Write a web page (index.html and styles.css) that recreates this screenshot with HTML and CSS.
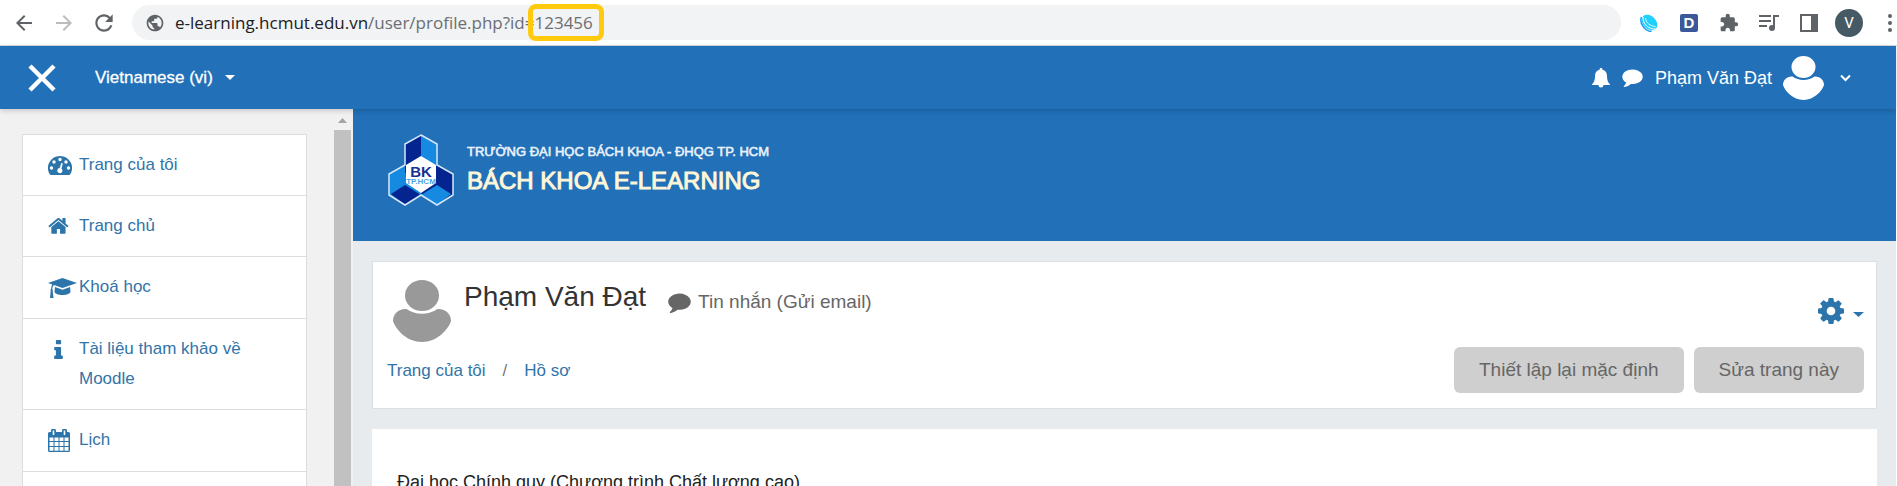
FILE: index.html
```html
<!DOCTYPE html>
<html lang="vi">
<head>
<meta charset="utf-8">
<title>Phạm Văn Đạt: Hồ sơ</title>
<link rel="stylesheet" href="styles.css">
</head>
<body>
<svg class="sprite" aria-hidden="true">
  <symbol id="comment" viewBox="0 128 1792 1664"><path d="M1792 896q0 174-120 321.500t-326 233-450 85.500q-70 0-145-8-198 175-460 242-49 14-114 22-17 2-30.500-9t-17.500-29v-1q-3-4-.5-12t2-10 4.500-9.500l6-9 7-8.500 8-9q7-8 31-34.500t34.500-38 31-39.500 32.500-51 27-59 26-76q-157-89-247.500-220t-90.500-281q0-130 71-248.500t191-204.500 286-136.500 348-50.500q244 0 450 85.500t326 233 120 321.500z"/></symbol>
  <symbol id="person" viewBox="0 0 58 62"><ellipse cx="29" cy="15.500" rx="17" ry="15.500"/><path d="M13.500 29C5.500 28.500 0 34 0 41c3 9 14 21 29 21s26-12 29-21c0-7-5.500-12.500-13.500-12C36 35.300 22 35.300 13.500 29z"/></symbol>
</svg>

<div class="browser">
  <button class="tool" aria-label="Back"><svg viewBox="0 0 24 24" width="24" height="24"><path d="M20 11H7.830l5.590-5.590L12 4l-8 8 8 8 1.410-1.410L7.830 13H20v-2z"/></svg></button>
  <button class="tool tool-off" aria-label="Forward"><svg viewBox="0 0 24 24" width="24" height="24"><path d="M4 11h12.170l-5.590-5.590L12 4l8 8-8 8-1.410-1.410L16.170 13H4v-2z"/></svg></button>
  <button class="tool" aria-label="Reload"><svg viewBox="0 0 24 24" width="26" height="26"><path d="M17.650 6.350C16.200 4.900 14.210 4 12 4c-4.420 0-7.990 3.580-7.990 8s3.570 8 7.990 8c3.730 0 6.840-2.550 7.730-6h-2.080c-.82 2.330-3.040 4-5.650 4-3.310 0-6-2.690-6-6s2.690-6 6-6c1.660 0 3.140.69 4.220 1.780L13 11h7V4l-2.350 2.350z"/></svg></button>
  <div class="address">
    <svg viewBox="0 0 24 24" width="20" height="20"><path d="M12 2C6.480 2 2 6.480 2 12s4.480 10 10 10 10-4.480 10-10S17.520 2 12 2zm-1 17.930c-3.950-.49-7-3.850-7-7.930 0-.62.08-1.210.21-1.790L9 15v1c0 1.100.9 2 2 2v1.930zm6.900-2.540c-.26-.81-1-1.390-1.900-1.390h-1v-3c0-.55-.45-1-1-1H8v-2h2c.55 0 1-.45 1-1V7h2c1.100 0 2-.9 2-2v-.41c2.930 1.190 5 4.060 5 7.410 0 2.080-.8 3.970-2.100 5.390z"/></svg>
    <div class="url" role="textbox" aria-label="Address"><span class="host">e-learning.hcmut.edu.vn</span>/user/profile.php?id=<span class="marked">123456</span></div>
  </div>
  <div class="extensions">
    <button class="tool" aria-label="Planet"><svg viewBox="0 0 18 18" width="18" height="18"><ellipse cx="9.500" cy="8.500" rx="9" ry="6.500" transform="rotate(45 9.500 8.500)" fill="#1fd0fb"/><path d="M1.500 3C-1 9 5 17.500 11.500 17.500" fill="none" stroke="#1a9cf8" stroke-width="1.500"/><path d="M3 3C2.500 9.500 8 15.500 16 15" fill="none" stroke="#fff" stroke-width="1"/><path d="M5.500 4C6 9 10 12 15.500 12.500" fill="none" stroke="#e4fbff" stroke-width="1"/></svg></button>
    <button class="tool" aria-label="Dictionary"><span class="dict">D</span></button>
    <button class="tool" aria-label="Extensions"><svg viewBox="0 0 24 24" width="20" height="20"><path d="M20.500 11H19V7c0-1.100-.9-2-2-2h-4V3.500C13 2.120 11.880 1 10.500 1S8 2.120 8 3.500V5H4c-1.100 0-1.990.9-1.990 2v3.800H3.500c1.490 0 2.700 1.210 2.700 2.700s-1.210 2.700-2.700 2.700H2V20c0 1.100.9 2 2 2h3.800v-1.500c0-1.490 1.210-2.700 2.700-2.700s2.700 1.210 2.700 2.700V22H17c1.100 0 2-.9 2-2v-4h1.500c1.380 0 2.500-1.120 2.500-2.500S21.880 11 20.500 11z"/></svg></button>
    <button class="tool" aria-label="Media"><svg viewBox="0 0 20 18" width="20" height="18"><path d="M0 1h12v2H0zM0 6h12v2H0zM0 11h8v2H0zM14 1h6v2h-4v11h-2z"/><circle cx="13" cy="14" r="3"/></svg></button>
    <button class="tool" aria-label="Side panel"><svg viewBox="0 0 18 18" width="18" height="18"><path fill-rule="evenodd" d="M0 0h18v18H0zM2 2v14h9V2z"/></svg></button>
    <button class="tool" aria-label="Profile"><span class="badge">V</span></button>
    <button class="tool dots" aria-label="Menu"><svg viewBox="0 0 4 18" width="4" height="18"><circle cx="2" cy="2" r="2"/><circle cx="2" cy="9" r="2"/><circle cx="2" cy="16" r="2"/></svg></button>
  </div>
</div>

<div class="app">
  <header class="topbar">
    <button class="plain" aria-label="Close menu"><svg viewBox="0 0 28 28" width="28" height="28"><path d="M2 2l24 24M26 2L2 26" stroke="#fff" stroke-width="4.500" fill="none"/></svg></button>
    <div class="language">
      <select aria-label="Language"><option>Vietnamese (vi)</option></select>
      <svg viewBox="0 0 10 5" width="10" height="5"><path d="M0 0h10L5 5z"/></svg>
    </div>
    <div class="account">
      <button class="plain" aria-label="Notifications"><svg viewBox="0 0 18 20" width="18" height="20"><path d="M9 0c.8 0 1.400.5 1.400 1.400v.4C13.600 2.500 15 5 15 8c0 4.500 1.200 6.700 3 8.200 0 .6-.4.9-1 .9h-5.500a2.500 2.500 0 0 1-5 0H1c-.6 0-1-.3-1-.9C1.800 14.700 3 12.500 3 8c0-3 1.400-5.500 4.600-6.200v-.4C7.600.5 8.200 0 9 0z"/></svg></button>
      <button class="plain" aria-label="Messages"><svg width="21" height="19"><use href="#comment"/></svg></button>
      <button class="plain user"><span>Phạm Văn Đạt</span><svg class="face" width="41" height="44"><use href="#person"/></svg><svg viewBox="0 0 11 8" width="11" height="8"><path d="M1 1.500l4.500 4.500L10 1.500" fill="none" stroke="#fff" stroke-width="2"/></svg></button>
    </div>
  </header>

  <div class="body">
    <aside class="sidebar">
      <nav class="menu">
        <a href="#"><span class="icon"><svg viewBox="0 0 24 19" width="24" height="19"><path fill-rule="evenodd" d="M12 0a12 12 0 0 1 10.300 18.200q-.4.800-1.200.8H2.900q-.8 0-1.200-.8A12 12 0 0 1 12 0zM3.500 10.300a1.700 1.700 0 1 0 0 3.400 1.700 1.700 0 0 0 0-3.400zm2.500-6a1.700 1.700 0 1 0 0 3.400 1.700 1.700 0 0 0 0-3.400zm6-2.500a1.700 1.700 0 1 0 0 3.400 1.700 1.700 0 0 0 0-3.400zm6 2.500a1.700 1.700 0 1 0 0 3.400 1.700 1.700 0 0 0 0-3.400zm2.500 6a1.700 1.700 0 1 0 0 3.400 1.700 1.700 0 0 0 0-3.400zM13.300 7l-1.600 5a2.600 2.600 0 1 0 1.700.5l1.500-5z"/></svg></span>Trang của tôi</a>
        <a href="#"><span class="icon"><svg viewBox="50 200 1700 1400" width="21" height="18"><path d="M1472 992v480q0 26-19 45t-45 19h-384v-384H768v384H384q-26 0-45-19t-19-45V992q0-1 .5-3t.5-3l575-474 575 474q1 2 1 6zm223-69l-62 74q-8 9-21 11h-3q-13 0-21-7L896 424l-692 577q-12 8-24 7-13-2-21-11l-62-74q-8-10-7-23.500t11-21.500l719-599q32-26 76-26t76 26l244 204V288q0-14 9-23t23-9h192q14 0 23 9t9 23v408l219 182q10 8 11 21.500t-7 23.500z"/></svg></span>Trang chủ</a>
        <a href="#"><span class="icon tall"><svg viewBox="0 0 29 20" width="29" height="20"><path d="M14.500 0L29 5l-14.500 5L6 7q-1.600 1-1.700 4.200 1 .6.400 1.800L5.500 20H2l.7-7q-.7-1.200.4-1.900Q3.200 8 4.300 6.400L0 5zM7 9l7.500 2.700L22 9l.5 4.500c0 2-3.700 3.500-8 3.500s-8-1.500-8-3.500z"/></svg></span>Khoá học</a>
        <a href="#"><span class="icon info"><svg viewBox="576 128 640 1408" width="9" height="19"><path d="M1216 1344v128q0 26-19 45t-45 19H640q-26 0-45-19t-19-45v-128q0-26 19-45t45-19h64V896h-64q-26 0-45-19t-19-45V704q0-26 19-45t45-19h384q26 0 45 19t19 45v576h64q26 0 45 19t19 45zM1088 192v192q0 26-19 45t-45 19H768q-26 0-45-19t-19-45V192q0-26 19-45t45-19h256q26 0 45 19t19 45z"/></svg></span>Tài liệu tham khảo về Moodle</a>
        <a href="#"><span class="icon tall"><svg viewBox="0 0 22 23" width="22" height="23"><path fill-rule="evenodd" d="M1.500 3H3V2a2 2 0 0 1 5 0v1h6V2a2 2 0 0 1 5 0v1h1.500Q22 3 22 4.500v17q0 1.500-1.500 1.500h-19Q0 23 0 21.500v-17Q0 3 1.500 3zM4.700 1.500V6h1.600V1.500zm11 0V6h1.600V1.500zM1.500 8.500V12h4V8.500zm5 0V12h4V8.500zm5 0V12h4V8.500zm5 0V12h4V8.500zM1.500 13v4h4v-4zm5 0v4h4v-4zm5 0v4h4v-4zm5 0v4h4v-4zM1.500 18v3.700h4V18zm5 0v3.700h4V18zm5 0v3.700h4V18zm5 0v3.700h4V18z"/></svg></span>Lịch</a>
      </nav>
      <div class="scroll"><svg viewBox="0 0 9 5" width="9" height="5"><path d="M4.500 0L9 5H0z"/></svg><div class="thumb"></div></div>
    </aside>

    <main class="main">
      <div class="banner">
        <svg class="logo" viewBox="0 0 66 72" width="66" height="72">
          <path d="M33 1l16 9v29L33 31l-16 8V10z" fill="#04258f"/><path d="M33 1l16 9v29l-16-8z" fill="#158ae0"/>
          <path d="M17 31L1 40v21l16 10 16-10V50l-16-8z" fill="#158ae0"/><path d="M3 60l14-9 16 10-16 10z" fill="#04258f"/>
          <path d="M49 31l16 9v21L49 71 33 61V50z" fill="#04258f"/><path d="M33 61l16-10 14 9-14 11z" fill="#158ae0"/>
          <path d="M33 22l15 9v18l-15 10-15-10V31z" fill="#fff"/>
          <path d="M33 1l16 9v21l16 9v21L49 71 33 61 17 71 1 61V40l16-9V10z" fill="none" stroke="#d6e8f8" stroke-width="1.500"/>
          <text x="33" y="43" class="logo-bk">BK</text><text x="33" y="50" class="logo-city">TP.HCM</text>
        </svg>
        <div class="brand"><div class="school">TRƯỜNG ĐẠI HỌC BÁCH KHOA - ĐHQG TP. HCM</div><div class="site">BÁCH KHOA E-LEARNING</div></div>
      </div>

      <section class="card profile">
        <div class="row">
          <svg class="portrait" width="58" height="62"><use href="#person"/></svg>
          <h1>Phạm Văn Đạt</h1>
          <a class="message" href="#"><svg width="23" height="21"><use href="#comment"/></svg>Tin nhắn (Gửi email)</a>
          <button class="plain settings" aria-label="Settings"><svg viewBox="128 128 1536 1536" width="26" height="26"><path d="M1152 896q0-106-75-181t-181-75-181 75-75 181 75 181 181 75 181-75 75-181zm512-109v222q0 12-8 23t-20 13l-185 28q-19 54-39 91 35 50 107 138 10 12 10 25t-9 23q-27 37-99 108t-94 71q-12 0-26-9l-138-108q-44 23-91 38-16 136-29 186-7 28-36 28H785q-14 0-24.500-8.500T749 1634l-28-184q-49-16-90-37l-141 107q-10 9-25 9-14 0-25-11-126-114-165-168-7-10-7-23 0-12 8-23 15-21 51-66.500t54-70.500q-27-50-41-99l-183-27q-13-2-21-12.500t-8-23.500V783q0-12 8-23t19-13l186-28q14-46 39-92-40-57-107-138-10-12-10-24 0-10 9-23 26-36 98.500-107.500T465 263q13 0 26 10l138 107q44-23 91-38 16-136 29-186 7-28 36-28h222q14 0 24.500 8.500T1043 158l28 184q49 16 90 37l142-107q9-9 24-9 13 0 25 10 129 119 165 170 7 8 7 22 0 12-8 23-15 21-51 66.500t-54 70.500q26 50 41 98l183 28q13 2 21 12.500t8 23.500z"/></svg><svg class="caret" viewBox="0 0 11 5" width="11" height="5"><path d="M0 0h11L5.500 5z"/></svg></button>
        </div>
        <div class="row row-links">
          <nav class="crumbs"><a href="#">Trang của tôi</a><span>/</span><a href="#">Hồ sơ</a></nav>
          <div class="actions"><button>Thiết lập lại mặc định</button><button>Sửa trang này</button></div>
        </div>
      </section>

      <section class="card details">Đại học Chính quy (Chương trình Chất lượng cao)</section>
    </main>
  </div>
</div>
</body>
</html>
```

FILE: styles.css
```css
* { box-sizing: border-box; }

body {
  display: flex;
  flex-direction: column;
  height: 100vh;
  margin: 0;
  overflow: hidden;
  background: #fff;
  color: #333;
  font: 17px/30px "Liberation Sans", Arial, sans-serif;
}

svg { display: block; flex: none; fill: currentColor; }
a { color: #3174a8; text-decoration: none; }
button, select { font: inherit; color: inherit; }
.sprite { position: absolute; width: 0; height: 0; }

.tool, .plain {
  display: flex;
  align-items: center;
  justify-content: center;
  padding: 0;
  border: 0;
  background: none;
}

/* Browser toolbar */
.browser {
  display: flex;
  flex: none;
  align-items: center;
  height: 46px;
  padding-left: 4px;
  border-bottom: 1px solid #d5d9de;
  color: #5f6368;
}
.tool { width: 40px; height: 36px; }
.tool-off { color: #babcbe; }
.address {
  display: flex;
  flex: 1;
  align-items: center;
  gap: 10px;
  height: 35px;
  margin-left: 8px;
  padding-left: 13px;
  border-radius: 18px;
  background: #f1f3f4;
}
.url { font: 17px/24px "Open Sans", sans-serif; color: #6b6e72; }
.host { color: #202124; }
.marked { position: relative; }
.marked::after {
  content: "";
  position: absolute;
  inset: -7px -11px -7px -6px;
  border: 5px solid #ffc90e;
  border-radius: 8px;
}
.extensions { display: flex; align-items: center; margin-left: 8px; }
.extensions .dots { width: 28px; padding-left: 13px; }
.dict {
  width: 18px;
  height: 18px;
  border-radius: 2px;
  background: #3b5998;
  color: #fff;
  font: bold 15px/18px "Liberation Sans", sans-serif;
}
.badge {
  width: 28px;
  height: 28px;
  border-radius: 50%;
  background: #455a64;
  color: #fff;
  font: 15px/28px Roboto, sans-serif;
}

/* Site header */
.app { display: flex; flex: 1; flex-direction: column; min-height: 0; margin-right: 1px; }
.topbar {
  position: relative;
  display: flex;
  flex: none;
  align-items: center;
  height: 63px;
  padding: 0 45px 0 28px;
  background: #2170b8;
  box-shadow: 0 2px 5px rgba(0, 0, 0, .16);
  color: #fff;
}
.language { display: flex; align-items: center; gap: 12px; margin-left: 39px; }
.language select { appearance: none; padding: 0; border: 0; background: none; -webkit-text-stroke: 0.3px #fff; }
.account { display: flex; align-items: center; gap: 13px; margin-left: auto; }
.user { gap: 11px; font-size: 18px; }
.user .face { margin-right: 5px; }
.account { gap: 12px; }

.body { display: flex; flex: 1; min-height: 0; }

/* Sidebar */
.sidebar { display: flex; flex: none; width: 353px; background: #f1f1f1; }
.menu {
  flex: 1;
  margin: 25px 27px 0 22px;
  border: 1px solid #dcdddd;
  border-bottom: 0;
  background: #fff;
}
.menu a {
  display: flex;
  align-items: flex-start;
  padding: 15px 26px 15px 25px;
  border-bottom: 1px solid #dcdddd;
}
.icon { display: flex; flex: none; align-items: center; width: 31px; height: 30px; color: #2c75ab; }
.icon.tall { height: 31px; }
.icon.info { padding-left: 6px; }
.scroll { display: flex; flex-direction: column; align-items: center; width: 17px; margin-right: 2px; color: #a3a3a3; }
.scroll svg { margin: 9px 0 7px; }
.thumb { flex: 1; width: 17px; background: #c1c1c1; }

/* Content */
.main { display: flex; flex: 1; flex-direction: column; min-width: 0; background: #e8ebee; }
.banner {
  display: flex;
  flex: none;
  align-items: flex-start;
  gap: 13px;
  height: 132px;
  padding: 25px 35px;
  background: #2170b8;
}
.logo-bk { fill: #17318c; font: bold 15px "Liberation Sans", sans-serif; text-anchor: middle; }
.logo-city { fill: #4aa3e6; font: bold 8px "Liberation Sans", sans-serif; text-anchor: middle; }
.brand { padding-top: 7px; white-space: nowrap; }
.school { color: #e9f1fb; font-size: 13px; line-height: 22px; -webkit-text-stroke: 0.6px #e9f1fb; }
.site { color: #fff6d8; font-size: 24px; line-height: 36px; -webkit-text-stroke: 1px #fff6d8; }

.card { margin: 20px 19px 0; background: #fff; }
.profile { flex: none; padding: 18px 12px 15px 14px; border: 1px solid #dcdfe1; }
.row { display: flex; align-items: flex-start; }
.portrait { margin-left: 6px; color: #999; }
h1 { margin: 0 22px 0 13px; font-size: 28px; font-weight: normal; line-height: 34px; }
.message { display: flex; align-items: center; gap: 7px; margin-top: 7px; color: #666; font-size: 19px; }
.settings { gap: 9px; margin: 18px 0 0 auto; color: #2c75ab; }
.settings .caret { margin-top: 6px; }
.row-links { justify-content: space-between; margin-top: 5px; }
.crumbs { display: flex; gap: 17px; margin-top: 9px; color: #777; }
.actions { display: flex; gap: 10px; }
.actions button {
  height: 46px;
  padding: 0 25px;
  border: 0;
  border-radius: 6px;
  background: #cfcfcf;
  color: #666;
  font-size: 19px;
}
.details { flex: 1; min-height: 0; padding: 38px 25px 0; overflow: hidden; color: #222; font-size: 18px; }
```
